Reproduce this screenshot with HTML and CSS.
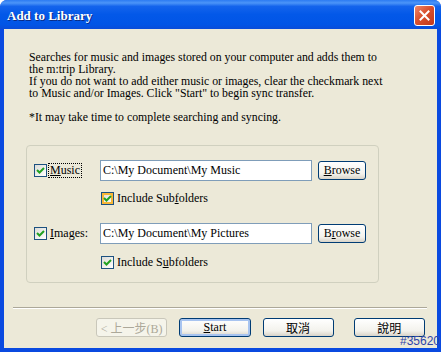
FILE: index.html
```html
<!DOCTYPE html>
<html lang="en">
<head>
    <meta charset="UTF-8">
    <title>Add to Library</title>
    <link rel="stylesheet" href="styles.css">
</head>
<body>

    <div class="window">
        <!-- Title bar -->
        <div class="titlebar">
            <span class="title">Add to Library</span>
            <span class="close">
                <svg width="11" height="11" viewBox="0 0 11 11"><path d="M1.5 1.5 L9.5 9.5 M9.5 1.5 L1.5 9.5" stroke="#fff" stroke-width="2" stroke-linecap="square"/></svg>
            </span>
        </div>

        <div class="content">
            <div class="intro">
                <p>Searches for music and images stored on your computer and adds them to</p>
                <p>the m:trip Library.</p>
                <p>If you do not want to add either music or images, clear the checkmark next</p>
                <p>to Music and/or Images. Click "Start" to begin sync transfer.</p>
                <p class="note">*It may take time to complete searching and syncing.</p>
            </div>

            <!-- Folder selection -->
            <div class="group">
                <div class="row">
                    <div class="pick">
                        <span class="check"><svg width="11" height="11" viewBox="0 0 11 11"><path d="M2 5 L4.5 7.5 L9 3" fill="none" stroke="#21A121" stroke-width="2"/></svg></span>
                        <span class="label focus"><u>M</u>usic</span>
                    </div>
                    <div class="path">C:\My Document\My Music</div>
                    <button class="browse"><u>B</u>rowse</button>
                </div>
                <div class="sub">
                    <span class="check hover"><svg width="11" height="11" viewBox="0 0 11 11"><path d="M2 5 L4.5 7.5 L9 3" fill="none" stroke="#21A121" stroke-width="2"/></svg></span>
                    <span class="label">Include Sub<u>f</u>olders</span>
                </div>

                <div class="row second">
                    <div class="pick">
                        <span class="check"><svg width="11" height="11" viewBox="0 0 11 11"><path d="M2 5 L4.5 7.5 L9 3" fill="none" stroke="#21A121" stroke-width="2"/></svg></span>
                        <span class="label"><u>I</u>mages:</span>
                    </div>
                    <div class="path">C:\My Document\My Pictures</div>
                    <button class="browse">B<u>r</u>owse</button>
                </div>
                <div class="sub last">
                    <span class="check"><svg width="11" height="11" viewBox="0 0 11 11"><path d="M2 5 L4.5 7.5 L9 3" fill="none" stroke="#21A121" stroke-width="2"/></svg></span>
                    <span class="label">Include S<u>u</u>bfolders</span>
                </div>
            </div>

            <div class="sep"></div>

            <div class="buttons">
                <button class="btn disabled">&lt; 上一步(B)</button>
                <button class="btn default"><u>S</u>tart</button>
                <button class="btn">取消</button>
                <button class="btn help">說明</button>
            </div>
        </div>

        <span class="tag">#35620</span>
    </div>

</body>
</html>
```

FILE: styles.css
```css
body {
    margin: 0;
    font-family: "Liberation Serif", "Noto Sans CJK TC", serif;
    font-size: 12px;
    color: #000;
}
.window {
    position: relative;
    width: 441px;
    height: 352px;
    box-sizing: border-box;
    background: #0A4AE0;
    border-radius: 7px 7px 0 0;
    display: flex;
    flex-direction: column;
}
.titlebar {
    height: 29px;
    flex-shrink: 0;
    display: flex;
    align-items: center;
    padding: 0 6px 0 7px;
    border-radius: 7px 7px 0 0;
    background: linear-gradient(#2C7BF2 0%, #4C95F8 10%, #1464EC 22%, #0358E8 50%, #0155E6 85%, #0A4CD8 100%);
}
.title {
    flex: 1;
    color: #fff;
    font-weight: bold;
    font-size: 13px;
    text-shadow: 1px 1px #0B2A82;
    margin-top: 2px;
}
.close {
    width: 21px;
    height: 21px;
    box-sizing: border-box;
    border: 1px solid #fff;
    border-radius: 3px;
    background: linear-gradient(135deg, #F0876A, #D9502E 45%, #C1381A);
    display: flex;
    align-items: center;
    justify-content: center;
    margin-top: 2px;
}
.content {
    flex: 1;
    margin: 0 4px 4px;
    background: #ECE9D8;
    display: flex;
    flex-direction: column;
}
.intro {
    padding: 22px 0 0 25px;
}
.intro p {
    margin: 0;
    font-size: 11.8px;
    line-height: 12px;
    height: 12px;
}
.intro .note {
    margin-top: 12px;
}
.group {
    margin: 22px 0 0 22px;
    width: 353px;
    box-sizing: border-box;
    border: 1px solid #D0D0BF;
    border-radius: 4px;
    padding: 14px 0 13px 7px;
}
.row {
    display: flex;
    align-items: center;
    height: 21px;
}
.row.second {
    margin-top: 18px;
}
.pick {
    width: 66px;
    display: flex;
    align-items: center;
}
.check {
    width: 13px;
    height: 13px;
    box-sizing: border-box;
    border: 1px solid #1C5180;
    background: linear-gradient(135deg, #DCDCD7, #FFFFFF);
    display: flex;
    align-items: center;
    justify-content: center;
    flex-shrink: 0;
}
.check.hover {
    box-shadow: inset 0 0 0 2px #F8B636;
}
.label {
    margin-left: 3px;
    line-height: 13px;
}
.label.focus {
    margin-left: 2px;
    padding: 0 1px;
    outline: 1px dotted #000;
}
.path {
    width: 212px;
    height: 21px;
    box-sizing: border-box;
    border: 1px solid #7F9DB9;
    background: #fff;
    padding: 0 0 0 2px;
    line-height: 19px;
}
.browse {
    margin-left: 6px;
    width: 48px;
    height: 19px;
    padding: 0;
    box-sizing: border-box;
    border: 1px solid #003C74;
    border-radius: 3px;
    background: linear-gradient(#FFFFFF, #F3F2EC 70%, #D8D3C8);
    font-family: inherit;
    font-size: 12px;
}
.sub {
    display: flex;
    align-items: center;
    margin: 11px 0 0 67px;
    height: 13px;
}
.sub.last {
    margin-top: 12px;
}
.sep {
    margin: 24px 10px 0 9px;
    border-top: 1px solid #ACA899;
    border-bottom: 1px solid #fff;
}
.buttons {
    display: flex;
    margin: 9px 0 0 92px;
}
.btn {
    width: 72px;
    height: 19px;
    padding: 0;
    margin-right: 12px;
    box-sizing: border-box;
    border: 1px solid #003C74;
    border-radius: 3px;
    background: linear-gradient(#FFFFFF, #F3F2EC 70%, #D8D3C8);
    font-family: inherit;
    font-size: 12px;
    color: #000;
}
.btn.disabled {
    border-color: #C9C7BA;
    background: #F5F4EA;
    color: #ACA899;
}
.btn.default {
    box-shadow: inset 0 0 0 2px #A8C4F0;
}
.btn.help {
    margin-left: 8px;
}
.tag {
    position: absolute;
    right: 1px;
    bottom: 4px;
    font-family: "Liberation Sans", sans-serif;
    font-size: 12px;
    color: #2F44A8;
    line-height: 13px;
}
```
